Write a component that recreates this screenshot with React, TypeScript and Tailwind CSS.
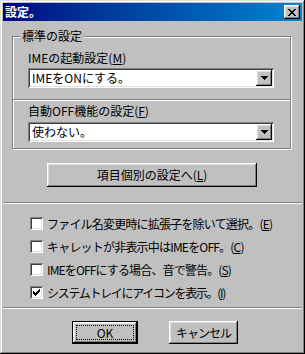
import React from "react";

const raised =
  "shadow-[inset_-1px_-1px_#000,inset_1px_1px_#fff,inset_-2px_-2px_#808080,inset_2px_2px_#dfdfdf]";
const sunken =
  "shadow-[inset_1px_1px_#808080,inset_-1px_-1px_#fff,inset_2px_2px_#404040,inset_-2px_-2px_#dfdfdf]";

function Combo({ text }: { text: string }) {
  return (
    <div className={`h-[20px] bg-white ${sunken} p-[2px] flex items-stretch`}>
      <div className="flex-1 pl-[2px] leading-[16px] text-black">{text}</div>
      <div className={`w-[16px] bg-[#c0c0c0] ${raised} flex items-center justify-center`}>
        <svg width="7" height="4" viewBox="0 0 7 4" shapeRendering="crispEdges">
          <path d="M0 0h7v1H0zM1 1h5v1H1zM2 2h3v1H2zM3 3h1v1H3z" fill="#000" />
        </svg>
      </div>
    </div>
  );
}

function Check({
  checked,
  track,
  children,
}: {
  checked?: boolean;
  track: string;
  children: React.ReactNode;
}) {
  return (
    <div className="flex items-center h-[13px]">
      <div className={`w-[13px] h-[13px] bg-white ${sunken} flex items-center justify-center shrink-0`}>
        {checked && (
          <svg width="7" height="7" viewBox="0 0 7 7" shapeRendering="crispEdges">
            <path
              d="M6 0h1v3H6zM5 1h1v3H5zM4 2h1v3H4zM3 3h1v3H3zM2 4h1v3H2zM1 3h1v3H1zM0 2h1v3H0z"
              fill="#000"
            />
          </svg>
        )}
      </div>
      <div className={`ml-[4px] leading-[14px] whitespace-nowrap ${track}`}>{children}</div>
    </div>
  );
}

function Sep() {
  return <div className="h-[2px] border-t border-t-[#808080] border-b border-b-white" />;
}

export default function App() {
  return (
    <div
      className="w-[305px] h-[354px] bg-[#c0c0c0] p-[3px] flex flex-col text-[12px] font-normal text-black shadow-[inset_-1px_-1px_#000,inset_1px_1px_#dfdfdf,inset_-2px_-2px_#808080,inset_2px_2px_#fff]"
      style={{ fontFamily: '"Noto Sans CJK JP", "MS UI Gothic", sans-serif' }}
    >
      {/* Title bar */}
      <div className="h-[18px] bg-linear-to-r from-[#000080] to-[#1084d0] flex items-center pl-[2px] pr-[2px]">
        <div className="text-white font-bold text-[12px] leading-[18px] flex-1">設定。</div>
        <div className={`w-[16px] h-[14px] bg-[#c0c0c0] ${raised} flex items-center justify-center`}>
          <svg width="8" height="7" viewBox="0 0 8 7" shapeRendering="crispEdges">
            <path
              d="M0 0h2v1H0zM6 0h2v1H6zM1 1h2v1H1zM5 1h2v1H5zM2 2h4v1H2zM3 3h2v1H3zM2 4h4v1H2zM1 5h2v1H1zM5 5h2v1H5zM0 6h2v1H0zM6 6h2v1H6z"
              fill="#000"
            />
          </svg>
        </div>
      </div>

      {/* Group box */}
      <div className="relative mt-[15px] ml-[9px] w-[279px] h-[113px] border border-[#808080] shadow-[1px_1px_#fff,inset_1px_1px_#fff] pt-[14px] pl-[15px] pr-[16px]">
        <div className="absolute -top-[8px] left-[7px] px-[2px] bg-[#c0c0c0] leading-[14px]">標準の設定</div>
        <div className="leading-[14px]">
          IMEの起動設定(<span className="underline">M</span>)
        </div>
        <div className="mt-[3px]">
          <Combo text="IMEをONにする。" />
        </div>
        <div className="-ml-[15px] -mr-[16px] mt-[11px]">
          <Sep />
        </div>
        <div className="mt-[3px] leading-[14px]">
          自動OFF機能の設定(<span className="underline">F</span>)
        </div>
        <div className="mt-[4px]">
          <Combo text="使わない。" />
        </div>
      </div>

      {/* Big button */}
      <div className={`mt-[14px] ml-[44px] w-[210px] h-[24px] flex items-center justify-center bg-[#c0c0c0] ${raised}`}>
        項目個別の設定へ(<span className="underline">L</span>)
      </div>

      <div className="mt-[15px]">
        <Sep />
      </div>

      {/* Checkboxes */}
      <div className="mt-[13px] ml-[27px] flex flex-col gap-[10px]">
        <Check track="tracking-[-0.8px]">
          ファイル名変更時に拡張子を除いて選択。(<span className="underline">E</span>)
        </Check>
        <Check track="tracking-[-0.8px]">
          キャレットが非表示中はIMEをOFF。(<span className="underline">C</span>)
        </Check>
        <Check track="tracking-[-0.85px]">
          IMEをOFFにする場合、音で警告。(<span className="underline">S</span>)
        </Check>
        <Check checked track="tracking-[-1.3px]">
          システムトレイにアイコンを表示。(<span className="underline">I</span>)
        </Check>
      </div>

      <div className="mt-[8px]">
        <Sep />
      </div>

      {/* Bottom buttons */}
      <div className="mt-[12px] flex">
        <div className="ml-[69px] w-[66px] h-[23px] border border-black">
          <div className={`w-full h-full ${raised} bg-[#c0c0c0] p-[3px]`}>
            <div className="w-full h-full outline outline-1 outline-dotted outline-black -outline-offset-1 flex items-center justify-center leading-[14px]">
              OK
            </div>
          </div>
        </div>
        <div className={`ml-[31px] w-[69px] h-[23px] ${raised} bg-[#c0c0c0] flex items-center justify-center tracking-[-1px]`}>
          キャンセル
        </div>
      </div>
    </div>
  );
}
